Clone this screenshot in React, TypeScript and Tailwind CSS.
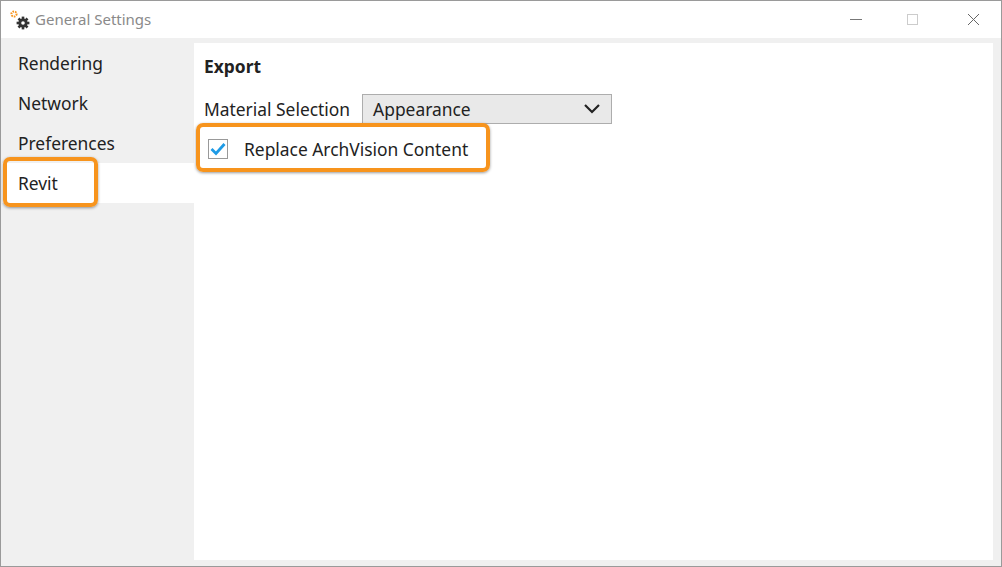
export default function App() {
  const font = { fontFamily: "'Noto Sans', 'Open Sans', sans-serif" };
  return (
    <div className="w-[1002px] h-[567px] bg-white border border-[#9a9a9a] flex flex-col overflow-hidden" style={font}>
      <div className="h-[37px] flex items-center shrink-0 bg-white">
        <div className="relative w-[22px] h-[22px] ml-[8px]">
          <svg width="22" height="22" viewBox="0 0 22 22" className="absolute left-0 top-0">
            <circle cx="5" cy="5" r="2.6" fill="none" stroke="#f7941d" strokeWidth="2" strokeDasharray="1.6 1" />
            <g transform="translate(14,14)">
              <circle r="4.6" fill="#333" />
              {[0, 45, 90, 135, 180, 225, 270, 315].map((a) => (
                <rect key={a} x="-1.3" y="-6.4" width="2.6" height="3" fill="#333" transform={`rotate(${a})`} />
              ))}
              <circle r="1.8" fill="#fff" />
            </g>
          </svg>
        </div>
        <span className="ml-[4px] text-[15px] text-[#8a8a8a]">General Settings</span>
        <div className="ml-auto flex items-center h-full">
          <div className="w-[46px] flex justify-center"><div className="w-[12px] h-px bg-[#777]" /></div>
          <div className="w-[66px] flex justify-center"><div className="w-[11px] h-[11px] border border-[#ccc]" /></div>
          <div className="w-[56px] flex justify-center">
            <svg width="13" height="13" viewBox="0 0 13 13"><path d="M1 1L12 12M12 1L1 12" stroke="#666" strokeWidth="1" /></svg>
          </div>
        </div>
      </div>
      <div className="flex-1 bg-[#f0f0f0] flex pt-[5px] pb-[6px] pr-[8px] pl-px">
        <div className="w-[192px] flex flex-col text-[17.4px] text-[#222]">
          <div className="h-[40px] flex items-center pl-[16px]">Rendering</div>
          <div className="h-[40px] flex items-center pl-[16px]">Network</div>
          <div className="h-[40px] flex items-center pl-[16px]">Preferences</div>
          <div className="relative h-[40px] flex items-center pl-[16px] bg-white">
            Revit
            <div className="absolute left-[1px] top-[-6px] w-[95px] h-[50px] border-[4px] border-[#f7941d] rounded-[7px] shadow-[0_1px_3px_rgba(0,0,0,0.4)]" />
          </div>
        </div>
        <div className="flex-1 bg-white pl-[10px] pt-[10px] text-[#222]">
          <div className="text-[17.4px] font-bold">Export</div>
          <div className="flex items-center mt-[15px] text-[17.4px]">
            <span>Material Selection</span>
            <div className="ml-[12px] w-[250px] h-[30px] bg-[#e9e9e9] border border-[#adadad] flex items-center px-[10px]">
              <span>Appearance</span>
              <svg className="ml-auto" width="18" height="12" viewBox="0 0 18 12"><path d="M2 2L9 9L16 2" fill="none" stroke="#222" strokeWidth="2.2" /></svg>
            </div>
          </div>
          <div className="relative mt-[10px] h-[30px] flex items-center text-[17.4px] ml-[4px]">
            <div className="w-[20px] h-[20px] border border-[#999] bg-white flex items-center justify-center">
              <svg width="16" height="14" viewBox="0 0 16 14"><path d="M1.5 7L6 11.5L14.5 2" fill="none" stroke="#1e9be6" strokeWidth="2.8" /></svg>
            </div>
            <span className="ml-[16px]">Replace ArchVision Content</span>
            <div className="absolute left-[-12px] top-[-11px] w-[294px] h-[49px] border-[4px] border-[#f7941d] rounded-[7px] shadow-[0_1px_3px_rgba(0,0,0,0.4)]" />
          </div>
        </div>
      </div>
    </div>
  );
}
